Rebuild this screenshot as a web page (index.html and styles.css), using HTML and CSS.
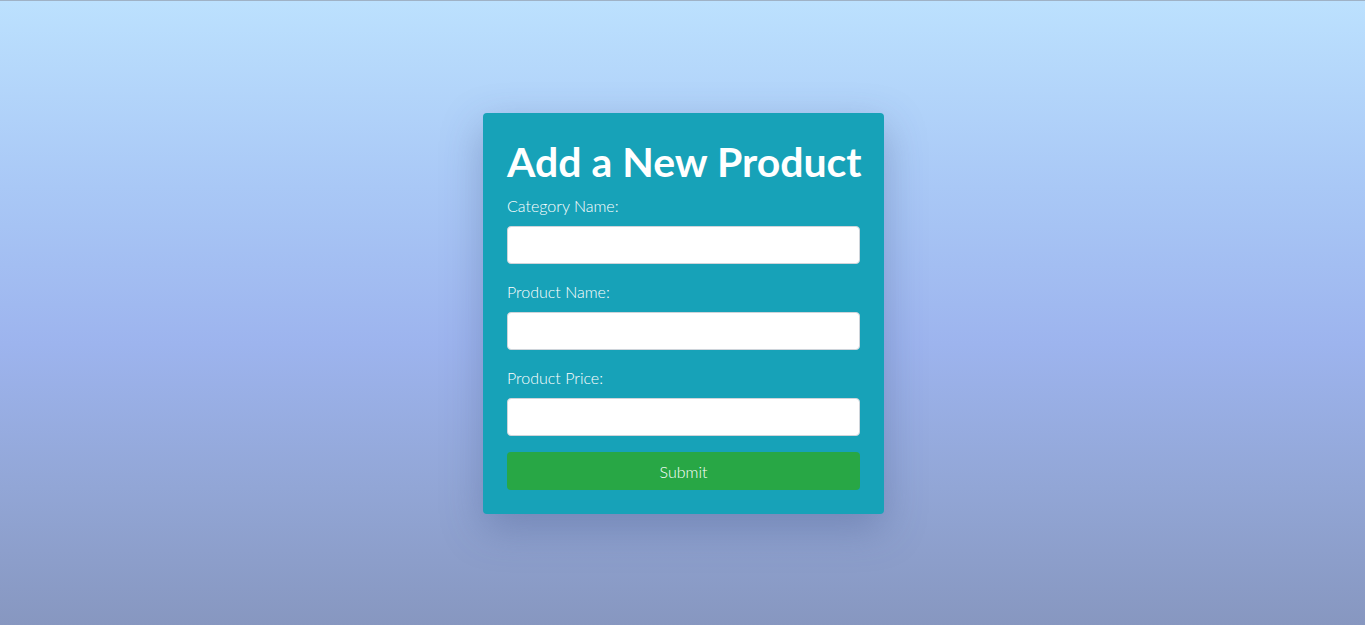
FILE: index.html
```html
<!DOCTYPE html>
<html lang="en">
<head>
<meta charset="utf-8">
<title>Add a New Product</title>
<link rel="stylesheet" href="styles.css">
</head>
<body>
<div class="page">
  <form class="card">
    <h1 class="title">Add a New Product</h1>
    <div class="group">
      <label class="label" for="cat">Category Name:</label>
      <input class="input" id="cat" type="text">
    </div>
    <div class="group">
      <label class="label" for="name">Product Name:</label>
      <input class="input" id="name" type="text">
    </div>
    <div class="group">
      <label class="label" for="price">Product Price:</label>
      <input class="input" id="price" type="text">
    </div>
    <button class="submit" type="button">Submit</button>
  </form>
</div>
</body>
</html>
```
FILE: styles.css
```css
* { box-sizing: border-box; }
html, body { margin: 0; height: 100%; }
body {
  font-family: Lato, "Open Sans", sans-serif;
  border-top: 1px solid #9fb2c6;
  background: linear-gradient(to bottom, #bce1fe 0%, #a9c8f6 30%, #9db4ee 55%, #92a6d6 78%, #8797c0 100%);
}
.page {
  height: 624px;
  display: flex;
  align-items: center;
  justify-content: center;
}
.card {
  width: 401px;
  margin: 1px 0 0 2px;
  padding: 24px;
  background: #17a2b8;
  border-radius: 4px;
  box-shadow: 0 14px 40px rgba(60, 80, 130, 0.35);
  color: #fff;
}
.title {
  margin: 0 0 8px;
  font-size: 41px;
  line-height: 49px;
  font-weight: 700;
  white-space: nowrap;
}
.group { margin-bottom: 16px; }
.label {
  display: block;
  margin-bottom: 8px;
  font-size: 16px;
  line-height: 24px;
  font-weight: 300;
}
.input {
  display: block;
  width: 100%;
  height: 38px;
  border: 1px solid #ced4da;
  border-radius: 4px;
  background: #fff;
  font: inherit;
}
.submit {
  display: block;
  width: 100%;
  height: 38px;
  border: 0;
  border-radius: 4px;
  background: #28a745;
  color: #fff;
  font-family: inherit;
  font-size: 16px;
  font-weight: 300;
}
```
